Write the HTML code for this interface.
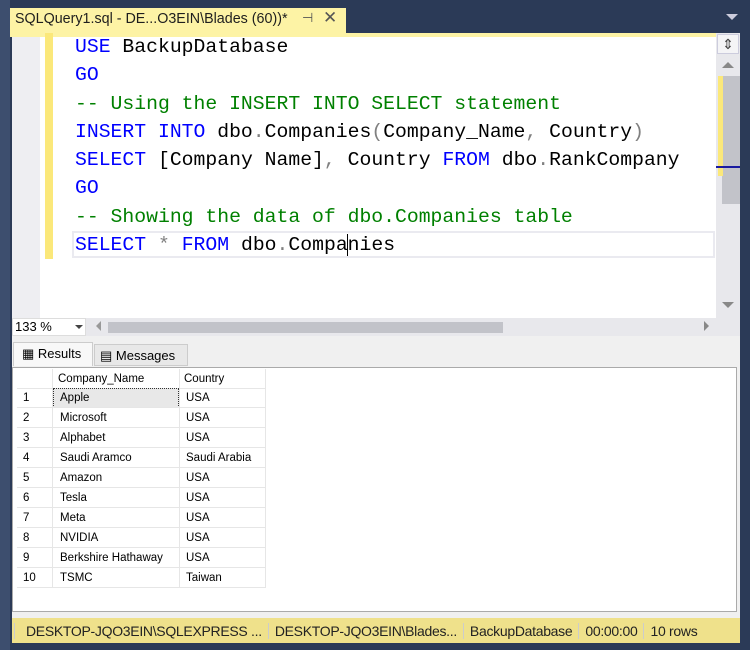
<!DOCTYPE html><html><head><style>
*{margin:0;padding:0;box-sizing:border-box}
body{width:750px;height:650px;background:#2b3a57;position:relative;overflow:hidden;font-family:"Liberation Sans",sans-serif}
.a{position:absolute}
.code{font-family:"Liberation Mono",monospace;font-size:19.75px;white-space:pre;color:#000;line-height:28.3px}
.k{color:#0000ff}.c{color:#008000}.g{color:#808080}
.row{position:absolute;left:17px;height:20px;width:248px;border-bottom:1px solid #e6e6e6}
.row span{position:absolute;top:4px;font-size:11.5px}
</style></head><body>
<div class="a" style="left:0;top:0;width:10px;height:650px;background:#3d4e6e"></div>
<div class="a" style="left:10px;top:8px;width:336px;height:26px;background:#fdf3a5"></div>
<div class="a" style="left:15px;top:11px;font-size:14.3px;color:#1e1e1e">SQLQuery1.sql - DE...O3EIN\Blades (60))*</div>
<div class="a" style="left:302px;top:10px;font-size:13px;color:#555">⊣</div>
<div class="a" style="left:323px;top:8px;font-size:17px;color:#555">✕</div>
<div class="a" style="left:726px;top:14px;width:0;height:0;border-left:6px solid transparent;border-right:6px solid transparent;border-top:6px solid #ccd"></div>
<div class="a" style="left:10px;top:33px;width:730px;height:4px;background:#fdf3a5"></div>
<div class="a" style="left:12px;top:37px;width:28px;height:281px;background:#eeeef2"></div>
<div class="a" style="left:40px;top:37px;width:676px;height:281px;background:#fff"></div>
<div class="a" style="left:45px;top:33px;width:8px;height:226px;background:#fbe87a"></div>
<div class="a" style="left:72px;top:231px;width:643px;height:27px;border:2px solid #eaeaf0"></div>
<div class="a code" style="left:75px;top:33px"><span class="k">USE</span> BackupDatabase
<span class="k">GO</span>
<span class="c">-- Using the INSERT INTO SELECT statement</span>
<span class="k">INSERT INTO</span> dbo<span class="g">.</span>Companies<span class="g">(</span>Company_Name<span class="g">,</span> Country<span class="g">)</span>
<span class="k">SELECT</span> [Company Name]<span class="g">,</span> Country <span class="k">FROM</span> dbo<span class="g">.</span>RankCompany
<span class="k">GO</span>
<span class="c">-- Showing the data of dbo.Companies table</span>
<span class="k">SELECT</span> <span class="g">*</span> <span class="k">FROM</span> dbo<span class="g">.</span>Compa<span style="border-left:1px solid #000;margin-left:-1px"></span>nies</div>
<div class="a" style="left:716px;top:33px;width:24px;height:285px;background:#e8e8ec"></div>
<div class="a" style="left:717px;top:34px;width:22px;height:20px;background:#f4f4f6;border:1px solid #ccd;font-size:14px;text-align:center;color:#444;line-height:18px">⇕</div>
<div class="a" style="left:722px;top:76px;width:18px;height:128px;background:#c2c3c9"></div>
<div class="a" style="left:718px;top:76px;width:5px;height:100px;background:#fbe87a"></div>
<div class="a" style="left:716px;top:166px;width:24px;height:2px;background:#1a1aa0"></div>
<div class="a" style="left:722px;top:62px;width:0;height:0;border-left:6px solid transparent;border-right:6px solid transparent;border-bottom:6px solid #888"></div>
<div class="a" style="left:722px;top:302px;width:0;height:0;border-left:6px solid transparent;border-right:6px solid transparent;border-top:6px solid #888"></div>
<div class="a" style="left:12px;top:318px;width:704px;height:18px;background:#e8e8ec"></div>
<div class="a" style="left:12px;top:318px;width:74px;height:18px;background:#fff;border:1px solid #ddd"></div>
<div class="a" style="left:15px;top:319px;font-size:13px">133 %</div>
<div class="a" style="left:75px;top:325px;width:0;height:0;border-left:4px solid transparent;border-right:4px solid transparent;border-top:4px solid #444"></div>
<div class="a" style="left:96px;top:321px;width:0;height:0;border-top:5px solid transparent;border-bottom:5px solid transparent;border-right:5px solid #999"></div>
<div class="a" style="left:108px;top:322px;width:395px;height:11px;background:#c2c3c9"></div>
<div class="a" style="left:704px;top:321px;width:0;height:0;border-top:5px solid transparent;border-bottom:5px solid transparent;border-left:5px solid #888"></div>
<div class="a" style="left:716px;top:318px;width:24px;height:18px;background:#e8e8ec"></div>
<div class="a" style="left:12px;top:336px;width:728px;height:282px;background:#f0f0f0"></div>
<div class="a" style="left:13px;top:342px;width:80px;height:24px;background:#f8f8f8;border:1px solid #ccc;border-bottom:none"></div>
<div class="a" style="left:22px;top:346px;font-size:13px">▦ Results</div>
<div class="a" style="left:94px;top:344px;width:94px;height:22px;background:#e8e8e8;border:1px solid #ccc"></div>
<div class="a" style="left:100px;top:348px;font-size:13px">▤ Messages</div>
<div class="a" style="left:12px;top:367px;width:725px;height:245px;background:#fff;border:1px solid #aaa"></div>
<div class="row" style="top:369px"><span style="left:41px">Company_Name</span><span style="left:167px">Country</span></div>
<div class="a" style="left:52px;top:369px;width:1px;height:219px;background:#e6e6e6"></div>
<div class="a" style="left:179px;top:369px;width:1px;height:219px;background:#e6e6e6"></div>
<div class="a" style="left:265px;top:369px;width:1px;height:219px;background:#e6e6e6"></div>
<div class="a" style="left:53px;top:388px;width:126px;height:20px;background:#e8e8e8;border:1px dotted #333"></div>
<div class="row" style="top:388px"><span style="left:6px">1</span><span style="left:43px">Apple</span><span style="left:169px">USA</span></div>
<div class="row" style="top:408px"><span style="left:6px">2</span><span style="left:43px">Microsoft</span><span style="left:169px">USA</span></div>
<div class="row" style="top:428px"><span style="left:6px">3</span><span style="left:43px">Alphabet</span><span style="left:169px">USA</span></div>
<div class="row" style="top:448px"><span style="left:6px">4</span><span style="left:43px">Saudi Aramco</span><span style="left:169px">Saudi Arabia</span></div>
<div class="row" style="top:468px"><span style="left:6px">5</span><span style="left:43px">Amazon</span><span style="left:169px">USA</span></div>
<div class="row" style="top:488px"><span style="left:6px">6</span><span style="left:43px">Tesla</span><span style="left:169px">USA</span></div>
<div class="row" style="top:508px"><span style="left:6px">7</span><span style="left:43px">Meta</span><span style="left:169px">USA</span></div>
<div class="row" style="top:528px"><span style="left:6px">8</span><span style="left:43px">NVIDIA</span><span style="left:169px">USA</span></div>
<div class="row" style="top:548px"><span style="left:6px">9</span><span style="left:43px">Berkshire Hathaway</span><span style="left:169px">USA</span></div>
<div class="row" style="top:568px"><span style="left:6px">10</span><span style="left:43px">TSMC</span><span style="left:169px">Taiwan</span></div>
<div class="a" style="left:12px;top:618px;width:728px;height:25px;background:#efe18b"></div>
<div class="a" style="left:14px;top:622px;font-size:14px;color:#222;white-space:nowrap;letter-spacing:-0.3px;line-height:18px"><span style="border-left:1px solid #ccc;padding:0 6px 0 11px">DESKTOP-JQO3EIN\SQLEXPRESS ...</span><span style="border-left:1px solid #ccc;padding:0 6px">DESKTOP-JQO3EIN\Blades...</span><span style="border-left:1px solid #ccc;padding:0 6px">BackupDatabase</span><span style="border-left:1px solid #ccc;padding:0 6px">00:00:00</span><span style="border-left:1px solid #ccc;padding:0 6px">10 rows</span></div>
</body></html>
